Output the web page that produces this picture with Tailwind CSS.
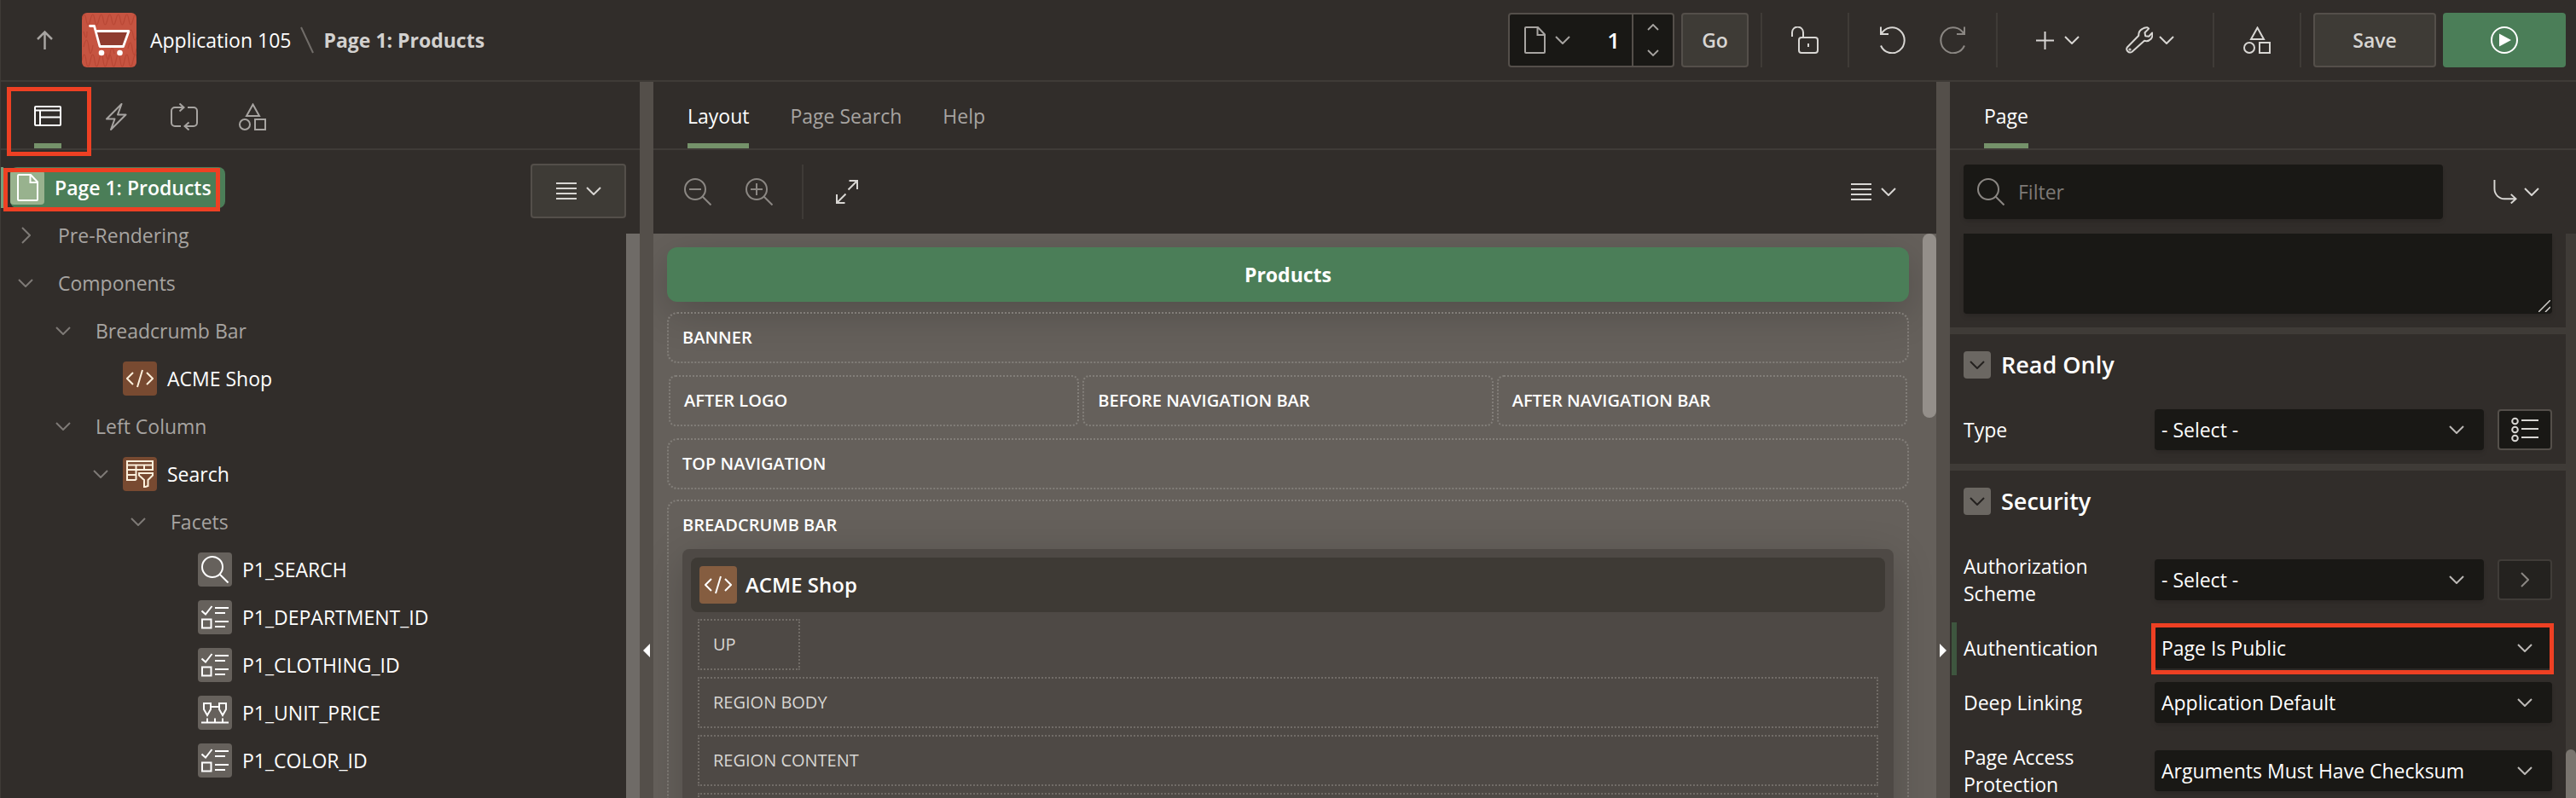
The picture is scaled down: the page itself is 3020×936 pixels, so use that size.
<!DOCTYPE html>
<html lang="en">
<head>
<meta charset="utf-8">
<title>Page Designer - Page 1: Products</title>
<script src="https://cdn.jsdelivr.net/npm/@tailwindcss/browser@4"></script>
</head>
<body class="flex h-screen flex-col overflow-hidden bg-[#312d2a] font-['Open_Sans','Noto_Sans',sans-serif] text-[23px] leading-8 font-medium text-white">

<svg class="hidden" fill="none">
  <symbol id="i-shapes" viewBox="0 0 32 32"><path d="M16.500 1.500L24 15H9zM19 19h12v12H19z"/><circle cx="7" cy="25" r="6"/></symbol>
  <symbol id="i-chev" viewBox="0 0 18 10"><path d="M1 1l8 8 8-8"/></symbol>
  <symbol id="i-list" viewBox="0 0 24 20"><path d="M0 1h24M0 7h24M0 13h24M0 19h24"/></symbol>
  <symbol id="i-doc" viewBox="0 0 25 32"><path d="M2 1h14l8 8.500V30a1 1 0 0 1-1 1H2a1 1 0 0 1-1-1V2a1 1 0 0 1 1-1zM15.500 1v9H24"/></symbol>
  <symbol id="i-code" viewBox="0 0 32 32"><path d="M8 9l-7 7 7 7M19 6l-6 20M24 9l7 7-7 7"/></symbol>
  <symbol id="i-search" viewBox="0 0 32 32"><circle cx="13" cy="13" r="12"/><path d="M21.500 21.500l10 10"/></symbol>
  <symbol id="i-check" viewBox="0 0 32 32"><path d="M.5 8.500L5 12.500 12.500 3M1 18.500h10.500v10H1zM16 5h16M16 11h12M16 21h16M16 27h12"/></symbol>
  <symbol id="i-range" viewBox="0 0 32 32"><path d="M3 5h8v7l-4 7-4-7zM21 5h8v7l-4 7-4-7zM11 9h10M0 27.500h32M7 22.500v5M16 22.500v5M25 22.500v5"/></symbol>
</svg>

<header class="flex h-24 shrink-0 items-center justify-between border-b-2 border-l border-[#3f3b37] pr-3">
  <div class="flex items-center">
    <button class="mr-8 ml-10 p-0" aria-label="Up"><svg class="h-6 w-[23px]" viewBox="0 0 23 24" fill="none" stroke="#a7a4a1" stroke-width="2.500"><path d="M11.500 23V3M3 11l8.500-8.500L20 11"/></svg></button>
    <svg class="size-16 rounded-md" viewBox="0 0 64 64" fill="none">
      <rect width="64" height="64" fill="#c65441"/>
      <g stroke="#b84735" stroke-width="1.200"><path d="M0 8q3-12 5 0t5 0 5 0 5 0 5 0 5 0 5 0 5 0 5 0 5 0 5 0 5 0 5 0M0 56q3-14 5 0t5 0 5 0 5 0 5 0 5 0 5 0 5 0 5 0 5 0 5 0 5 0 5 0M2 22q4 14 4 0M2 40q4-16 6 0t5-2M55 26q3-12 5 0t5 0M54 42q3-14 5 0t5 0M28 48q3 14 5 0t5 0"/></g>
      <path d="M17 21.500h38l-6.500 18H21z" fill="#8f3c30"/>
      <path d="M9.500 15.500h5l6.500 24h27.500L55 21.500H17" stroke="#fff" stroke-width="2.800" stroke-linecap="round" stroke-linejoin="round"/>
      <circle cx="23" cy="47" r="3.300" fill="#fff"/><circle cx="44.500" cy="47" r="3.300" fill="#fff"/>
    </svg>
    <nav class="ml-4 flex items-center" aria-label="Breadcrumb">
      <a class="font-normal" href="#app">Application 105</a>
      <svg class="mx-[11px] h-8 w-4" viewBox="0 0 16 32" stroke="#716d69" stroke-width="2"><path d="M1 1l14 30"/></svg>
      <span class="font-bold text-[#d3d1cf]">Page 1: Products</span>
    </nav>
  </div>
  <div class="flex h-16 items-center text-[#d8d6d3]">
    <div class="flex h-16 w-[195px] items-stretch rounded border-2 border-[#544f4a] bg-[#191815]">
      <button class="flex items-center gap-[11px] pl-[17px]" aria-label="Page finder">
        <svg class="h-8 w-[25px]" fill="none" stroke="#a7a4a1" stroke-width="2"><use href="#i-doc"/></svg>
        <svg class="h-[10px] w-[18px]" fill="none" stroke="#a7a4a1" stroke-width="2"><use href="#i-chev"/></svg>
      </button>
      <input class="w-0 min-w-0 flex-1 bg-transparent pr-[14px] text-right text-[26px] font-semibold text-white outline-none" aria-label="Page number" value="1">
      <div class="flex w-12 flex-col items-center justify-between border-l-2 border-[#544f4a] py-[11px]">
        <button aria-label="Next page"><svg class="block h-2 w-[14px]" viewBox="0 0 14 8" fill="none" stroke="#a7a4a1" stroke-width="1.800"><path d="M1 7l6-6 6 6"/></svg></button>
        <button aria-label="Previous page"><svg class="block h-2 w-[14px]" viewBox="0 0 14 8" fill="none" stroke="#a7a4a1" stroke-width="1.800"><path d="M1 1l6 6 6-6"/></svg></button>
      </div>
    </div>
    <button class="ml-2 h-16 w-[79px] rounded border-2 border-[#544f4a] bg-[#3e3b36] font-semibold">Go</button>
    <div class="ml-[14px] flex h-16 w-[102px] items-center justify-center border-l-2 border-[#3f3b37]">
      <button aria-label="Lock"><svg class="block size-8" viewBox="0 0 32 32" fill="none" stroke="currentColor" stroke-width="2"><path d="M1 12V7a6 6 0 0 1 13 0v5M20 20v4"/><rect x="9" y="13" width="22" height="18" rx="3"/></svg></button>
    </div>
    <div class="flex h-16 w-[174px] items-center justify-center gap-10 border-l-2 border-[#3f3b37]">
      <button aria-label="Undo"><svg class="block h-8 w-[30px]" viewBox="0 0 30 32" fill="none" stroke="currentColor" stroke-width="2"><path d="M1 .5V9h9M1.500 9A14.500 15 0 1 1 1 22.500"/></svg></button>
      <button aria-label="Redo"><svg class="block h-8 w-[30px]" viewBox="0 0 30 32" fill="none" stroke="#8b8783" stroke-width="2"><path d="M29 .5V9h-9M28.500 9A14.500 15 0 1 0 29 22.500"/></svg></button>
    </div>
    <div class="flex h-16 w-[254px] items-center border-l-2 border-[#3f3b37] pl-[45px]">
      <button class="flex items-center gap-3" aria-label="Create"><svg class="size-[21px]" viewBox="0 0 21 21" stroke="currentColor" stroke-width="2"><path d="M10.500 0v21M0 10.500h21"/></svg><svg class="h-[10px] w-[18px]" fill="none" stroke="currentColor" stroke-width="2"><use href="#i-chev"/></svg></button>
      <button class="ml-[54px] flex items-center gap-[7px]" aria-label="Utilities"><svg class="size-8" viewBox="0 0 32 32" fill="none" stroke="currentColor" stroke-width="2" stroke-linejoin="round"><path d="M19.500 3a8 8 0 0 1 6-1.800l1.600 1.400-4.600 4.600.6 4 4.100.6 4-4.300a8.500 8.500 0 0 1-1.600 7.300 7.500 7.500 0 0 1-7.600 2L7.500 29.700a3.900 3.900 0 0 1-5.400-5.500L15.300 10.800A8 8 0 0 1 19.500 3z"/><circle cx="5" cy="27" r=".6"/></svg><svg class="h-[10px] w-[18px]" fill="none" stroke="currentColor" stroke-width="2"><use href="#i-chev"/></svg></button>
    </div>
    <div class="flex h-16 w-[102px] items-center justify-center border-l-2 border-[#3f3b37]">
      <button aria-label="Shared components"><svg class="block size-8" fill="none" stroke="currentColor" stroke-width="2"><use href="#i-shapes"/></svg></button>
    </div>
    <div class="flex h-16 items-center gap-2 border-l-2 border-[#3f3b37] pl-[14px]">
      <button class="h-16 w-36 rounded border-2 border-[#544f4a] bg-[#3e3b36] font-semibold">Save</button>
      <button class="flex h-16 w-36 items-center justify-center rounded bg-[#4b7e58]" aria-label="Save and run page"><svg class="size-8" viewBox="0 0 32 32" fill="none"><circle cx="16" cy="16" r="15" stroke="#fff" stroke-width="2"/><path d="M10 8.500l14 7.500-14 7.500z" fill="#fff"/></svg></button>
    </div>
  </div>
</header>

<main class="flex min-h-0 flex-1">
  <section class="flex w-[750px] shrink-0 flex-col border-l border-[#3f3b37]" aria-label="Page rendering">
    <div class="flex h-20 shrink-0 gap-12 border-b-2 border-[#3f3b37] pl-[39px] text-[#a7a4a1]">
      <button class="relative flex items-center border-b-[6px] border-[#75926a] pt-2" aria-label="Rendering">
        <svg class="size-8" viewBox="0 0 32 32" fill="none" stroke="#fff" stroke-width="2"><rect x="1" y="5" width="30" height="22" rx="1"/><path d="M1 9.500h30M7 9.500V27M7 17.500h24"/></svg>
        <span class="pointer-events-none absolute -left-8 top-[6px] h-[81px] w-[99px] border-[5px] border-[#ee4023]"></span>
      </button>
      <button class="flex items-center pt-2 pb-1" aria-label="Dynamic actions"><svg class="size-8" viewBox="0 0 32 32" fill="none" stroke="currentColor" stroke-width="2" stroke-linejoin="round"><path d="M22.500 1L5 18.500h9.500L10 31l17.500-17.500H18z"/></svg></button>
      <button class="flex items-center pt-2 pb-1" aria-label="Processing"><svg class="size-8" viewBox="0 0 32 32" fill="none" stroke="currentColor" stroke-width="2"><path d="M12 27H5a4 4 0 0 1-4-4V9a4 4 0 0 1 4-4h10M10.500.5L15.500 5l-5 4.500M20 5h7a4 4 0 0 1 4 4v14a4 4 0 0 1-4 4H17M21.500 22.500l-5 4.500 5 4.500"/></svg></button>
      <button class="flex items-center pt-2 pb-1" aria-label="Page shared components"><svg class="size-8" fill="none" stroke="currentColor" stroke-width="2"><use href="#i-shapes"/></svg></button>
    </div>
    <div class="flex min-h-0 flex-1 justify-between pt-4">
      <ul class="flex flex-col" role="tree" aria-label="Page components">
        <li class="relative flex h-14 items-center" role="treeitem" aria-selected="true">
          <span class="h-12 w-[3px] bg-[#75a07c]"></span>
          <span class="ml-2 flex h-12 items-center rounded-lg bg-[#4b7e58] pr-4 font-semibold">
            <span class="mr-3 flex size-10 items-center justify-center rounded bg-[#98b28e]"><svg class="h-8 w-[25px]" fill="none" stroke="#fff" stroke-width="2"><use href="#i-doc"/></svg></span>Page 1: Products</span>
          <span class="pointer-events-none absolute left-[3px] top-[5px] h-[51px] w-[254px] border-[5px] border-[#ee4023]"></span>
        </li>
        <li class="flex h-14 items-center pl-[7px] text-[#a7a4a1]" role="treeitem"><span class="mr-4 flex w-11 justify-center"><svg class="h-5 w-[11px]" viewBox="0 0 11 20" fill="none" stroke="#7e7a76" stroke-width="2"><path d="M1 1l9 9-9 9"/></svg></span>Pre-Rendering</li>
        <li class="flex h-14 items-center pl-[7px] text-[#a7a4a1]" role="treeitem"><span class="mr-4 flex w-11 justify-center"><svg class="h-[10px] w-[18px]" fill="none" stroke="#7e7a76" stroke-width="2"><use href="#i-chev"/></svg></span>Components</li>
        <li class="flex h-14 items-center pl-[51px] text-[#a7a4a1]" role="treeitem"><span class="mr-4 flex w-11 justify-center"><svg class="h-[10px] w-[18px]" fill="none" stroke="#7e7a76" stroke-width="2"><use href="#i-chev"/></svg></span>Breadcrumb Bar</li>
        <li class="flex h-14 items-center gap-3 pl-[143px]" role="treeitem"><span class="flex size-10 items-center justify-center rounded bg-[#784a31]"><svg class="size-8" fill="none" stroke="#fcf0dc" stroke-width="2"><use href="#i-code"/></svg></span>ACME Shop</li>
        <li class="flex h-14 items-center pl-[51px] text-[#a7a4a1]" role="treeitem"><span class="mr-4 flex w-11 justify-center"><svg class="h-[10px] w-[18px]" fill="none" stroke="#7e7a76" stroke-width="2"><use href="#i-chev"/></svg></span>Left Column</li>
        <li class="flex h-14 items-center pl-[95px]" role="treeitem"><span class="mr-1 flex w-11 justify-center"><svg class="h-[10px] w-[18px]" fill="none" stroke="#7e7a76" stroke-width="2"><use href="#i-chev"/></svg></span><span class="mr-3 flex size-10 items-center justify-center rounded bg-[#784a31]"><svg class="size-8" viewBox="0 0 32 32" fill="none" stroke="#fcf0dc" stroke-width="2"><path d="M1 1h30v10H1zM1 5.500h30M11.500 5.500V23M21 5.500V11M1 11v12h10.500M1 17h10.500M15 15h16v2.500L25.500 23v7L21 31.500V23l-6-5.500z"/></svg></span>Search</li>
        <li class="flex h-14 items-center pl-[139px] text-[#a7a4a1]" role="treeitem"><span class="mr-4 flex w-11 justify-center"><svg class="h-[10px] w-[18px]" fill="none" stroke="#7e7a76" stroke-width="2"><use href="#i-chev"/></svg></span>Facets</li>
        <li class="flex h-14 items-center gap-3 pl-[231px]" role="treeitem"><span class="flex size-10 items-center justify-center rounded bg-[#66615c]"><svg class="size-8" fill="none" stroke="#fff" stroke-width="2"><use href="#i-search"/></svg></span>P1_SEARCH</li>
        <li class="flex h-14 items-center gap-3 pl-[231px]" role="treeitem"><span class="flex size-10 items-center justify-center rounded bg-[#66615c]"><svg class="size-8" fill="none" stroke="#fff" stroke-width="2"><use href="#i-check"/></svg></span>P1_DEPARTMENT_ID</li>
        <li class="flex h-14 items-center gap-3 pl-[231px]" role="treeitem"><span class="flex size-10 items-center justify-center rounded bg-[#66615c]"><svg class="size-8" fill="none" stroke="#fff" stroke-width="2"><use href="#i-check"/></svg></span>P1_CLOTHING_ID</li>
        <li class="flex h-14 items-center gap-3 pl-[231px]" role="treeitem"><span class="flex size-10 items-center justify-center rounded bg-[#66615c]"><svg class="size-8" fill="none" stroke="#fff" stroke-width="2"><use href="#i-range"/></svg></span>P1_UNIT_PRICE</li>
        <li class="flex h-14 items-center gap-3 pl-[231px]" role="treeitem"><span class="flex size-10 items-center justify-center rounded bg-[#66615c]"><svg class="size-8" fill="none" stroke="#fff" stroke-width="2"><use href="#i-check"/></svg></span>P1_COLOR_ID</li>
      </ul>
      <div class="flex w-32 flex-col">
        <button class="flex h-16 w-28 shrink-0 items-center justify-center gap-[11px] rounded border-2 border-[#544f4a] bg-[#3e3b36] text-[#d8d6d3]" aria-label="Tree menu"><svg class="h-5 w-6" fill="none" stroke="currentColor" stroke-width="2"><use href="#i-list"/></svg><svg class="h-[10px] w-[18px]" fill="none" stroke="currentColor" stroke-width="2"><use href="#i-chev"/></svg></button>
        <div class="mt-[18px] w-4 flex-1 self-end bg-[#6f6b67]"></div>
      </div>
    </div>
  </section>

  <div class="flex w-4 shrink-0 items-start justify-center bg-[#544f4a] pt-[659px]" role="separator"><svg class="h-4 w-2" viewBox="0 0 8 16"><path d="M8 0v16L0 8z" fill="#fff"/></svg></div>

  <section class="flex min-w-0 flex-1 flex-col" aria-label="Layout">
    <div class="flex h-20 shrink-0 gap-12 border-b-2 border-[#3f3b37] px-10 text-[#a7a4a1]">
      <button class="border-t-8 border-b-[6px] border-t-transparent border-b-[#75926a] text-white">Layout</button>
      <button class="border-t-8 border-b-[6px] border-transparent">Page Search</button>
      <button class="border-t-8 border-b-[6px] border-transparent">Help</button>
    </div>
    <div class="flex h-[98px] shrink-0 items-center px-9 text-[#d8d6d3]">
      <button aria-label="Zoom out"><svg class="block size-8" viewBox="0 0 32 32" fill="none" stroke="#8b8783" stroke-width="2"><circle cx="13" cy="13" r="12"/><path d="M21.500 21.500l10 10M6 13h14"/></svg></button>
      <button class="ml-10" aria-label="Zoom in"><svg class="block size-8" viewBox="0 0 32 32" fill="none" stroke="#8b8783" stroke-width="2"><circle cx="13" cy="13" r="12"/><path d="M21.500 21.500l10 10M6 13h14M13 6v14"/></svg></button>
      <span class="ml-[34px] h-16 w-[2px] bg-[#3f3b37]"></span>
      <button class="ml-[35px]" aria-label="Expand"><svg class="block size-8" viewBox="0 0 32 32" fill="none" stroke="currentColor" stroke-width="2"><path d="M18.500 3H28v10M28 3L17.500 13.500M13.500 29H4V19M4 29l10.500-10.500"/></svg></button>
      <button class="ml-auto mr-[11px] flex items-center gap-[11px]" aria-label="Layout menu"><svg class="h-5 w-6" fill="none" stroke="currentColor" stroke-width="2"><use href="#i-list"/></svg><svg class="h-[10px] w-[18px]" fill="none" stroke="currentColor" stroke-width="2"><use href="#i-chev"/></svg></button>
    </div>
    <div class="flex min-h-0 flex-1 justify-between overflow-hidden bg-[#65605b]">
      <div class="min-w-0 flex-1 px-4 pt-4 text-xl leading-7 font-semibold">
        <h1 class="flex h-16 items-center justify-center rounded-xl bg-[#4b7e58] text-[23px] font-bold shadow-[0_12px_48px_rgb(0_0_0/0.200)]">Products</h1>
        <div class="relative mt-3 flex h-[60px] items-center rounded-xl border-2 border-dotted border-[#827e79] px-4">BANNER</div>
        <div class="mt-[14px] grid grid-cols-3 gap-1 px-[2px]">
          <div class="flex h-[60px] items-center rounded-lg border-2 border-dotted border-[#827e79] px-4">AFTER LOGO</div>
          <div class="flex h-[60px] items-center rounded-lg border-2 border-dotted border-[#827e79] px-4">BEFORE NAVIGATION BAR</div>
          <div class="flex h-[60px] items-center rounded-lg border-2 border-dotted border-[#827e79] px-4">AFTER NAVIGATION BAR</div>
        </div>
        <div class="mt-[14px] flex h-[60px] items-center rounded-xl border-2 border-dotted border-[#827e79] px-4">TOP NAVIGATION</div>
        <div class="mt-3 rounded-xl border-2 border-dotted border-[#827e79] px-4 pb-4">
          <div class="flex h-14 items-center">BREADCRUMB BAR</div>
          <div class="rounded-lg bg-[#4e4945] p-[10px] font-normal text-[#d8d6d3] shadow-[0_12px_48px_rgb(0_0_0/0.200)]">
            <div class="flex h-16 items-center gap-[10px] rounded-lg bg-[#3e3a35] px-[10px] text-2xl font-semibold text-white"><span class="flex size-11 items-center justify-center rounded bg-[#855d40]"><svg class="size-8" fill="none" stroke="#fff" stroke-width="2"><use href="#i-code"/></svg></span>ACME Shop</div>
            <div class="flex flex-col gap-2 px-2 pt-2">
              <div class="flex h-[60px] w-30 items-center rounded-xs border-2 border-dotted border-[#716c67] px-4">UP</div>
              <div class="flex h-[60px] items-center rounded-xs border-2 border-dotted border-[#716c67] px-4">REGION BODY</div>
              <div class="flex h-[60px] items-center rounded-xs border-2 border-dotted border-[#716c67] px-4">REGION CONTENT</div>
              <div class="h-[60px] rounded-xs border-2 border-dotted border-[#716c67]"></div>
            </div>
          </div>
        </div>
      </div>
      <div class="w-4 shrink-0"><div class="h-[216px] rounded-lg bg-[#948f8a]"></div></div>
    </div>
  </section>

  <div class="flex w-4 shrink-0 items-start justify-center bg-[#544f4a] pt-[659px]" role="separator"><svg class="h-4 w-2" viewBox="0 0 8 16"><path d="M0 0v16l8-8z" fill="#fff"/></svg></div>

  <section class="flex w-[734px] shrink-0 flex-col" aria-label="Property editor">
    <div class="flex h-20 shrink-0 border-b-2 border-[#3f3b37] px-10">
      <button class="border-t-8 border-b-[6px] border-t-transparent border-b-[#75926a]">Page</button>
    </div>
    <div class="flex h-[98px] shrink-0 items-center px-4">
      <label class="flex h-16 w-[562px] items-center gap-4 rounded bg-[#191815] px-4 shadow-md">
        <svg class="size-8" fill="none" stroke="#8b8783" stroke-width="2"><use href="#i-search"/></svg>
        <input class="min-w-0 flex-1 bg-transparent outline-none placeholder:text-[#7e7a76]" type="search" placeholder="Filter" aria-label="Filter properties">
      </label>
      <button class="mr-[27px] ml-auto flex items-center gap-2" aria-label="Go to group"><svg class="h-7 w-7" viewBox="0 0 28 29" fill="none" stroke="#d8d6d3" stroke-width="2"><path d="M1 0v11a12 12 0 0 0 12 12h14M21 17.500l6 5.500-6 5.500"/></svg><svg class="h-[10px] w-[18px]" fill="none" stroke="#d8d6d3" stroke-width="2"><use href="#i-chev"/></svg></button>
    </div>
    <div class="flex min-h-0 flex-1 overflow-hidden">
      <form class="flex min-w-0 flex-1 flex-col gap-2 bg-[#3f3b37]">
        <div class="relative bg-[#312d2a] px-4 pb-4">
          <textarea class="block h-[94px] w-full resize-none rounded-b bg-[#191815] shadow-md outline-none" aria-label="Comments"></textarea>
          <svg class="pointer-events-none absolute right-[18px] bottom-[18px] size-[14px]" viewBox="0 0 14 14" stroke="#d0cecb" stroke-width="1.500"><path d="M0 14L14 0M8 14l6-6"/></svg>
        </div>
        <fieldset class="bg-[#312d2a] px-4 pb-2">
          <div class="mb-2 flex h-[72px] items-center gap-3">
            <button type="button" class="flex size-8 items-center justify-center rounded bg-[#6b6762]" aria-label="Collapse Read Only"><svg class="h-[10px] w-[18px]" fill="none" stroke="#24211f" stroke-width="2"><use href="#i-chev"/></svg></button>
            <h2 class="text-[27px] font-semibold">Read Only</h2>
          </div>
          <div class="flex min-h-16 items-center">
            <label class="w-56 shrink-0 pr-8" for="ro-type">Type</label>
            <div class="relative flex-1"><select id="ro-type" class="h-12 w-full appearance-none rounded bg-[#191815] pl-2 shadow-md outline-none"><option>- Select -</option></select><svg class="pointer-events-none absolute top-[19px] right-[23px] h-[10px] w-[18px]" fill="none" stroke="#bcb9b6" stroke-width="2"><use href="#i-chev"/></svg></div>
            <button type="button" class="ml-4 flex h-12 w-16 items-center justify-center rounded border-2 border-[#544f4a] bg-[#191815]" aria-label="Pick type"><svg class="size-8" viewBox="0 0 32 32" fill="none" stroke="#d8d6d3" stroke-width="2"><circle cx="4.500" cy="6" r="3.300"/><circle cx="4.500" cy="16" r="3.300"/><circle cx="4.500" cy="26" r="3.300"/><path d="M12 5h20M12 15h20M12 25h20"/></svg></button>
          </div>
        </fieldset>
        <fieldset class="flex-1 bg-[#312d2a] px-4">
          <div class="mb-2 flex h-[72px] items-center gap-3">
            <button type="button" class="flex size-8 items-center justify-center rounded bg-[#6b6762]" aria-label="Collapse Security"><svg class="h-[10px] w-[18px]" fill="none" stroke="#24211f" stroke-width="2"><use href="#i-chev"/></svg></button>
            <h2 class="text-[27px] font-semibold">Security</h2>
          </div>
          <div class="flex min-h-16 items-center">
            <label class="w-56 shrink-0 py-4 pr-8" for="authz">Authorization Scheme</label>
            <div class="relative flex-1"><select id="authz" class="h-12 w-full appearance-none rounded bg-[#191815] pl-2 shadow-md outline-none"><option>- Select -</option></select><svg class="pointer-events-none absolute top-[19px] right-[23px] h-[10px] w-[18px]" fill="none" stroke="#bcb9b6" stroke-width="2"><use href="#i-chev"/></svg></div>
            <button type="button" class="ml-4 flex h-12 w-16 items-center justify-center rounded border-2 border-[#403c38] bg-[#24221f]" aria-label="Go to authorization scheme"><svg class="h-[18px] w-[10px]" viewBox="0 0 10 18" fill="none" stroke="#8b8783" stroke-width="2"><path d="M1 1l8 8-8 8"/></svg></button>
          </div>
          <div class="relative flex min-h-16 items-center">
            <span class="absolute -left-[14px] top-[2px] h-[62px] w-[6px] bg-[#3e563f]"></span>
            <label class="w-56 shrink-0 pr-8" for="authn">Authentication</label>
            <div class="relative flex-1"><select id="authn" class="h-12 w-full appearance-none rounded bg-[#191815] pl-2 shadow-md outline-none"><option>Page Is Public</option></select><svg class="pointer-events-none absolute top-[19px] right-[23px] h-[10px] w-[18px]" fill="none" stroke="#bcb9b6" stroke-width="2"><use href="#i-chev"/></svg>
              <span class="pointer-events-none absolute -top-[5px] -right-[2px] -left-1 h-[60px] border-[5px] border-[#ee4023]"></span></div>
          </div>
          <div class="flex min-h-16 items-center">
            <label class="w-56 shrink-0 pr-8" for="deep">Deep Linking</label>
            <div class="relative flex-1"><select id="deep" class="h-12 w-full appearance-none rounded bg-[#191815] pl-2 shadow-md outline-none"><option>Application Default</option></select><svg class="pointer-events-none absolute top-[19px] right-[23px] h-[10px] w-[18px]" fill="none" stroke="#bcb9b6" stroke-width="2"><use href="#i-chev"/></svg></div>
          </div>
          <div class="flex min-h-16 items-center">
            <label class="w-56 shrink-0 py-4 pr-8" for="access">Page Access Protection</label>
            <div class="relative flex-1"><select id="access" class="h-12 w-full appearance-none rounded bg-[#191815] pl-2 shadow-md outline-none"><option>Arguments Must Have Checksum</option></select><svg class="pointer-events-none absolute top-[19px] right-[23px] h-[10px] w-[18px]" fill="none" stroke="#bcb9b6" stroke-width="2"><use href="#i-chev"/></svg></div>
          </div>
        </fieldset>
      </form>
      <div class="flex w-3 shrink-0 flex-col justify-end overflow-hidden bg-[#3f3b37]"><div class="h-[57px] rounded-t-md bg-[#7a756f]"></div></div>
    </div>
  </section>
</main>
</body>
</html>
